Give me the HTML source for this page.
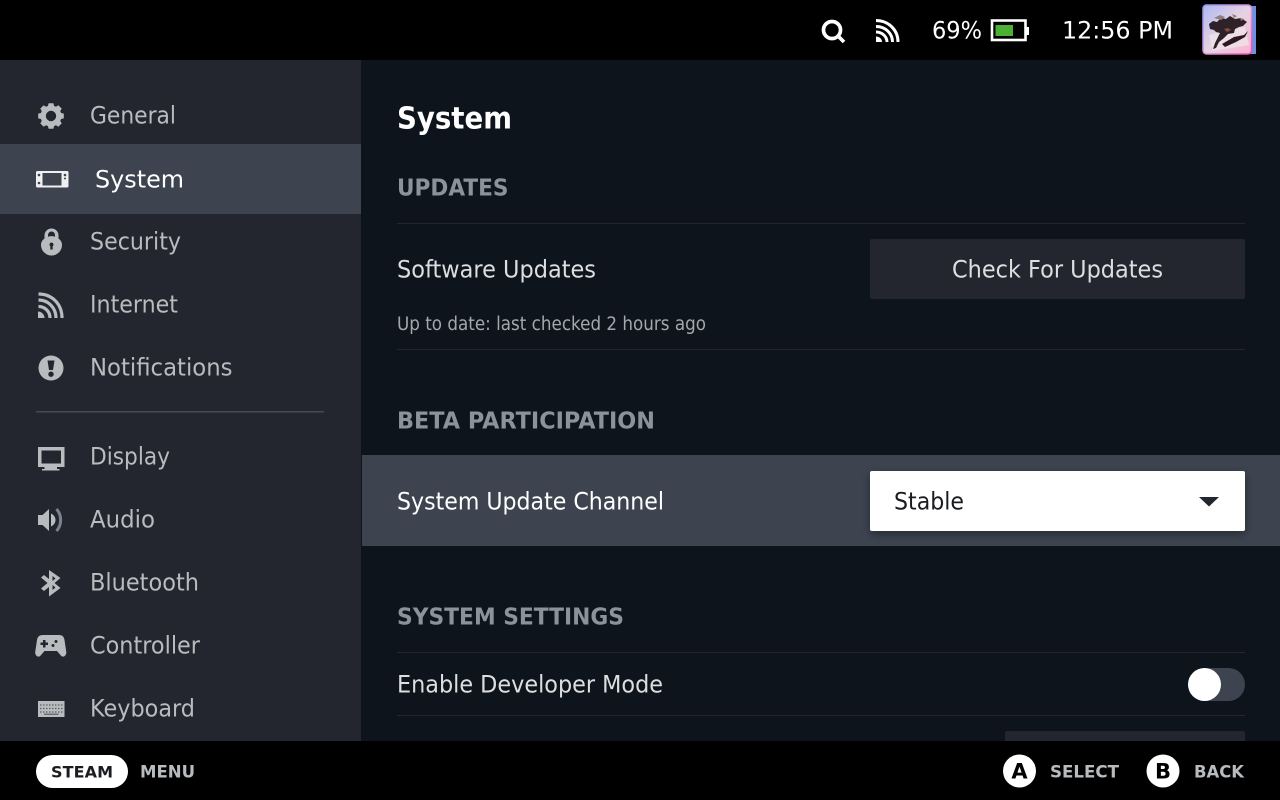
<!DOCTYPE html>
<html lang="en">
<head>
<meta charset="utf-8">
<title>System</title>
<style>
html,body{margin:0;padding:0;width:1280px;height:800px;overflow:hidden;background:#000}
svg{display:block}
text{font-family:"DejaVu Sans","Liberation Sans",sans-serif}
.s{font-size:24px;fill:#b8bcbf}
.m{font-size:24px;fill:#dcdedf}
.h{font-size:23.5px;font-weight:bold;fill:#8b929a}
.f{font-size:17px;font-weight:bold;fill:#b8bcbf}
</style>
</head>
<body>
<svg width="1280" height="800" viewBox="0 0 1280 800" xmlns="http://www.w3.org/2000/svg">
<defs>
<filter id="sh" x="-5%" y="-30%" width="110%" height="170%"><feDropShadow dx="0" dy="3" stdDeviation="5" flood-color="#000" flood-opacity=".4"/></filter>
<linearGradient id="av" x1="0" y1="0" x2="1" y2="1"><stop offset="0" stop-color="#aeb8f2"/><stop offset=".5" stop-color="#e6d2e2"/><stop offset="1" stop-color="#f9b4d2"/></linearGradient>
<linearGradient id="avb" x1="0" y1="0" x2="1" y2="1"><stop offset="0" stop-color="#8f9cf0"/><stop offset=".55" stop-color="#d890d8"/><stop offset="1" stop-color="#f04fb0"/></linearGradient>
</defs>
<rect width="1280" height="800" fill="#000"/>
<rect x="361" y="60" width="919" height="681" fill="#0e141b"/>
<rect x="0" y="60" width="361" height="681" fill="#23262e"/>
<rect x="0" y="144" width="361" height="70" fill="#3d4450"/>
<rect x="36" y="411" width="288" height="1.5" fill="#454a55"/>

<!-- sidebar icons -->
<g fill="#b8bcbf">
<path transform="translate(51,116) scale(.8) translate(-51,-119)" fill-rule="evenodd" d="M48 103h6l.8 3.400 2.400 1 3-1.800 4.200 4.200-1.800 3 1 2.400 3.400.8v6l-3.400.8-1 2.400 1.800 3-4.200 4.200-3-1.800-2.400 1-.8 3.400h-6l-.8-3.400-2.400-1-3 1.800-4.200-4.200 1.800-3-1-2.400-3.400-.8v-6l3.400-.8 1-2.400-1.800-3 4.200-4.200 3 1.800 2.400-1zM51 112.500a6.500 6.500 0 1 0 0 13a6.500 6.500 0 0 0 0-13z"/>
<!-- lock -->
<path fill-rule="evenodd" d="M44.500 238.500v-3a7 7 0 0 1 14 0v3c2 1.500 3.500 3.500 3.500 6.500a10.500 10.500 0 0 1-21 0c0-3 1.500-5 3.500-6.500zM48 236.700a10.500 10.500 0 0 1 7 0v-1.700a3.500 3.500 0 0 0-7 0zM51.500 242.500a2 2 0 0 0-1.200 3.600v3.400h2.400v-3.400a2 2 0 0 0-1.200-3.600z"/>
<!-- notifications -->
<path fill-rule="evenodd" d="M51 355.500a12.500 12.500 0 1 1 0 25a12.500 12.500 0 0 1 0-25zM47.500 360.500l1.500 9.500h4l1.500-9.500zM51 371.500a2.700 2.700 0 1 0 0 5.400a2.700 2.700 0 0 0 0-5.400z"/>
<!-- display -->
<path fill-rule="evenodd" d="M38 447h26.500v20h-7.500v2h2.500v1.500h-17.500v-1.500h2.500v-2h-6.500zM41.500 450.500v13h19.500v-13z"/>
<!-- audio -->
<path d="M38 515h4.500l6.500-6v22l-6.500-6h-4.500z"/>
<path d="M51 513.500c3 1.500 4.500 4 4.500 6.500s-1.500 5-4.500 6.500z"/>
<!-- bluetooth -->
<path fill-rule="evenodd" d="M49 570l11.500 8-6 5 6 5-11.500 8.500v-9.500l-5 4-3-2.500 6.500-5.500-6.500-5.500 3-2.500 5 4zM52.500 576v5l3-2.500zM52.500 585v5l3-2.500z"/>
<!-- controller -->
<path fill-rule="evenodd" d="M43 635h16c3.500 0 5 2 5.500 5l1.800 12c.3 3-2.500 6-5 4l-4.300-5h-12.500l-4.300 5c-2.500 2-5.300-1-5-4l1.800-12c.5-3 2-5 6-5zM43 640v2.500h-2.500v2.500h2.500v2.500h2.500v-2.500h2.500v-2.500h-2.500v-2.500zM56 640a1.500 1.500 0 1 0 0 3a1.500 1.500 0 0 0 0-3zM53 644a1.500 1.500 0 1 0 0 3a1.500 1.500 0 0 0 0-3z"/>
<!-- keyboard -->
<path d="M38 701h26.500v16h-26.500z"/>
</g>
<path d="M40 705h22.500M40 708.500h22.500M40 712h22.500" stroke="#5a5e66" stroke-width="1.300" stroke-dasharray="1.500 1.500" fill="none"/>
<rect x="44" y="713.500" width="14.500" height="1.500" fill="#6a6e76"/>
<path d="M56.500 509c5.500 6 5.500 16 0 22" stroke="#7d8189" stroke-width="3" fill="none"/>
<path d="M54.500 512c3.800 4.500 3.800 11.500 0 16" stroke="#b8bcbf" stroke-width="0" fill="none"/>
<!-- handheld -->
<rect x="36" y="171" width="32.500" height="16.500" rx="1.500" fill="#eef0f1"/>
<rect x="42.500" y="173" width="19" height="12.500" fill="#3d4450"/>
<g fill="#3d4450"><circle cx="39" cy="175" r="1.300"/><circle cx="39" cy="183" r="1.300"/><circle cx="65" cy="175" r="1.300"/><circle cx="65" cy="178.500" r="1"/></g>
<!-- wifi sidebar -->
<g fill="none" stroke="#b8bcbf" stroke-width="3.200">
<path d="M38.500 294c13.500 0 23.500 10 23.500 24"/>
<path d="M38.500 300c10 0 17.500 8 17.500 18"/>
<path d="M38.500 306.500c6.500 0 11.500 5 11.500 11.500"/>
</g>
<path d="M38 311.500c3.500 0 6.500 3 6.500 6.500h-6.500z" fill="#b8bcbf"/>

<!-- sidebar text -->
<text class="s" x="90" y="123.500" textLength="86" lengthAdjust="spacingAndGlyphs">General</text>
<text class="s" x="95" y="187.500" textLength="89" lengthAdjust="spacingAndGlyphs" style="fill:#fff">System</text>
<text class="s" x="90" y="249.500" textLength="91" lengthAdjust="spacingAndGlyphs">Security</text>
<text class="s" x="90" y="312.500" textLength="88" lengthAdjust="spacingAndGlyphs">Internet</text>
<text class="s" x="90" y="375.500" textLength="142.500" lengthAdjust="spacingAndGlyphs">Notifications</text>
<text class="s" x="90" y="464.500" textLength="80" lengthAdjust="spacingAndGlyphs">Display</text>
<text class="s" x="90" y="527.500" textLength="65" lengthAdjust="spacingAndGlyphs">Audio</text>
<text class="s" x="90" y="590.500" textLength="109" lengthAdjust="spacingAndGlyphs">Bluetooth</text>
<text class="s" x="90" y="653.500" textLength="110" lengthAdjust="spacingAndGlyphs">Controller</text>
<text class="s" x="90" y="716.500" textLength="105" lengthAdjust="spacingAndGlyphs">Keyboard</text>

<!-- main content -->
<text x="397" y="128.500" textLength="115" lengthAdjust="spacingAndGlyphs" style="font-size:30px;font-weight:bold;fill:#fff">System</text>
<text class="h" x="397" y="195.500" textLength="111.500" lengthAdjust="spacingAndGlyphs">UPDATES</text>
<rect x="397" y="223" width="848" height="1" fill="#23262e"/>
<text class="m" x="397" y="277.500" textLength="199" lengthAdjust="spacingAndGlyphs">Software Updates</text>
<rect x="870" y="239" width="375" height="60" rx="2" fill="#23262e"/>
<text class="m" x="952" y="277.500" textLength="211" lengthAdjust="spacingAndGlyphs">Check For Updates</text>
<text x="397" y="330" textLength="309" lengthAdjust="spacingAndGlyphs" style="font-size:18.500px;fill:#a3a8ae">Up to date: last checked 2 hours ago</text>
<rect x="397" y="349" width="848" height="1" fill="#23262e"/>

<text class="h" x="397" y="428.500" textLength="258" lengthAdjust="spacingAndGlyphs">BETA PARTICIPATION</text>
<rect x="362" y="455" width="918" height="91" fill="#3d4450"/>
<text class="m" x="397" y="509.500" textLength="267" lengthAdjust="spacingAndGlyphs" style="fill:#fff">System Update Channel</text>
<rect x="870" y="471" width="375" height="60" rx="2" fill="#fff" filter="url(#sh)"/>
<text class="m" x="894" y="509.500" textLength="70" lengthAdjust="spacingAndGlyphs" style="fill:#1a1c20">Stable</text>
<path d="M1199 497h20l-10 9.500z" fill="#23262e"/>

<text class="h" x="397" y="624.500" textLength="227" lengthAdjust="spacingAndGlyphs">SYSTEM SETTINGS</text>
<rect x="397" y="652" width="848" height="1" fill="#23262e"/>
<text class="m" x="397" y="692.500" textLength="266" lengthAdjust="spacingAndGlyphs">Enable Developer Mode</text>
<rect x="1188" y="668" width="57" height="33" rx="16.500" fill="#3d4450"/>
<circle cx="1204.500" cy="684.500" r="16.500" fill="#fff"/>
<rect x="397" y="715" width="848" height="1" fill="#23262e"/>
<rect x="1005" y="731" width="240" height="14" rx="2" fill="#23262e"/>

<!-- top bar -->
<rect x="0" y="0" width="1280" height="60" fill="#000"/>
<circle cx="832" cy="30" r="8.500" fill="none" stroke="#fff" stroke-width="3.700"/>
<path d="M838 36l6 6" stroke="#fff" stroke-width="3.700" fill="none"/>
<g fill="none" stroke="#fff" stroke-width="3">
<path d="M876 20.500c12.500 0 22 9.500 22 21.500"/>
<path d="M876 26.500c9.500 0 16.500 7 16.500 15.500"/>
<path d="M876 32c6 0 11 4.500 11 10"/>
</g>
<path d="M876 36.500c3.500 0 6 2.500 6 5.500h-6z" fill="#fff"/>
<text x="932" y="38.500" textLength="50" lengthAdjust="spacingAndGlyphs" style="font-size:24px;fill:#fff">69%</text>
<rect x="992" y="20.500" width="33.500" height="19.500" fill="none" stroke="#fff" stroke-width="2.600"/>
<rect x="1025" y="27" width="4" height="8" fill="#fff"/>
<rect x="995.500" y="25" width="17.500" height="11" fill="#4cb035"/>
<text x="1062" y="38.500" textLength="111" lengthAdjust="spacingAndGlyphs" style="font-size:24px;fill:#fff">12:56 PM</text>
<!-- avatar -->
<rect x="1207" y="6" width="49" height="48" fill="#6f8fe0"/>
<rect x="1203" y="5" width="48.500" height="49" rx="3.500" fill="url(#av)" stroke="url(#avb)" stroke-width="1.500"/>
<path d="M1206 30l50 0 0 0" fill="none"/>
<path d="M1209 35l36-8 4 18-36 6z" fill="#efe6ea" opacity=".75"/>
<path d="M1209 24l4-3 4 1 4-4 5 1 4-3 5 3 6-1 6 4-4 4-4 1-4 2-1 4-6 1-4 4-5 4-3 6-3 1 2-6 3-6 2-4-4-1-2-2-4-1z" fill="#2e2228"/>
<path d="M1222 44l12-7 10-2 4-4-3 6-9 5-11 5z" fill="#2c1a20"/>
<path d="M1224 29l4-1 3 2-4 2z" fill="#8a4a3a"/>
<path d="M1214 18l6-3 5 2-4 3zM1232 14l5 2-3 2zM1240 18l4 1-3 2z" fill="#8d7f7f"/>

<!-- bottom bar -->
<rect x="0" y="741" width="1280" height="59" fill="#000"/>
<rect x="36" y="755" width="92" height="33" rx="16.500" fill="#fff"/>
<text x="51" y="777.500" textLength="62" lengthAdjust="spacing" style="font-size:16px;font-weight:bold;fill:#1a1c20">STEAM</text>
<text class="f" x="140" y="777.500" textLength="55" lengthAdjust="spacingAndGlyphs">MENU</text>
<circle cx="1019.500" cy="771" r="16.500" fill="#fff"/>
<text x="1019.500" y="778.500" text-anchor="middle" style="font-size:21px;font-weight:bold;fill:#000">A</text>
<text class="f" x="1050" y="777.500" textLength="69" lengthAdjust="spacingAndGlyphs">SELECT</text>
<circle cx="1163" cy="771" r="16.500" fill="#fff"/>
<text x="1163" y="778.500" text-anchor="middle" style="font-size:21px;font-weight:bold;fill:#000">B</text>
<text class="f" x="1194" y="777.500" textLength="50" lengthAdjust="spacingAndGlyphs">BACK</text>
</svg>
</body>
</html>
